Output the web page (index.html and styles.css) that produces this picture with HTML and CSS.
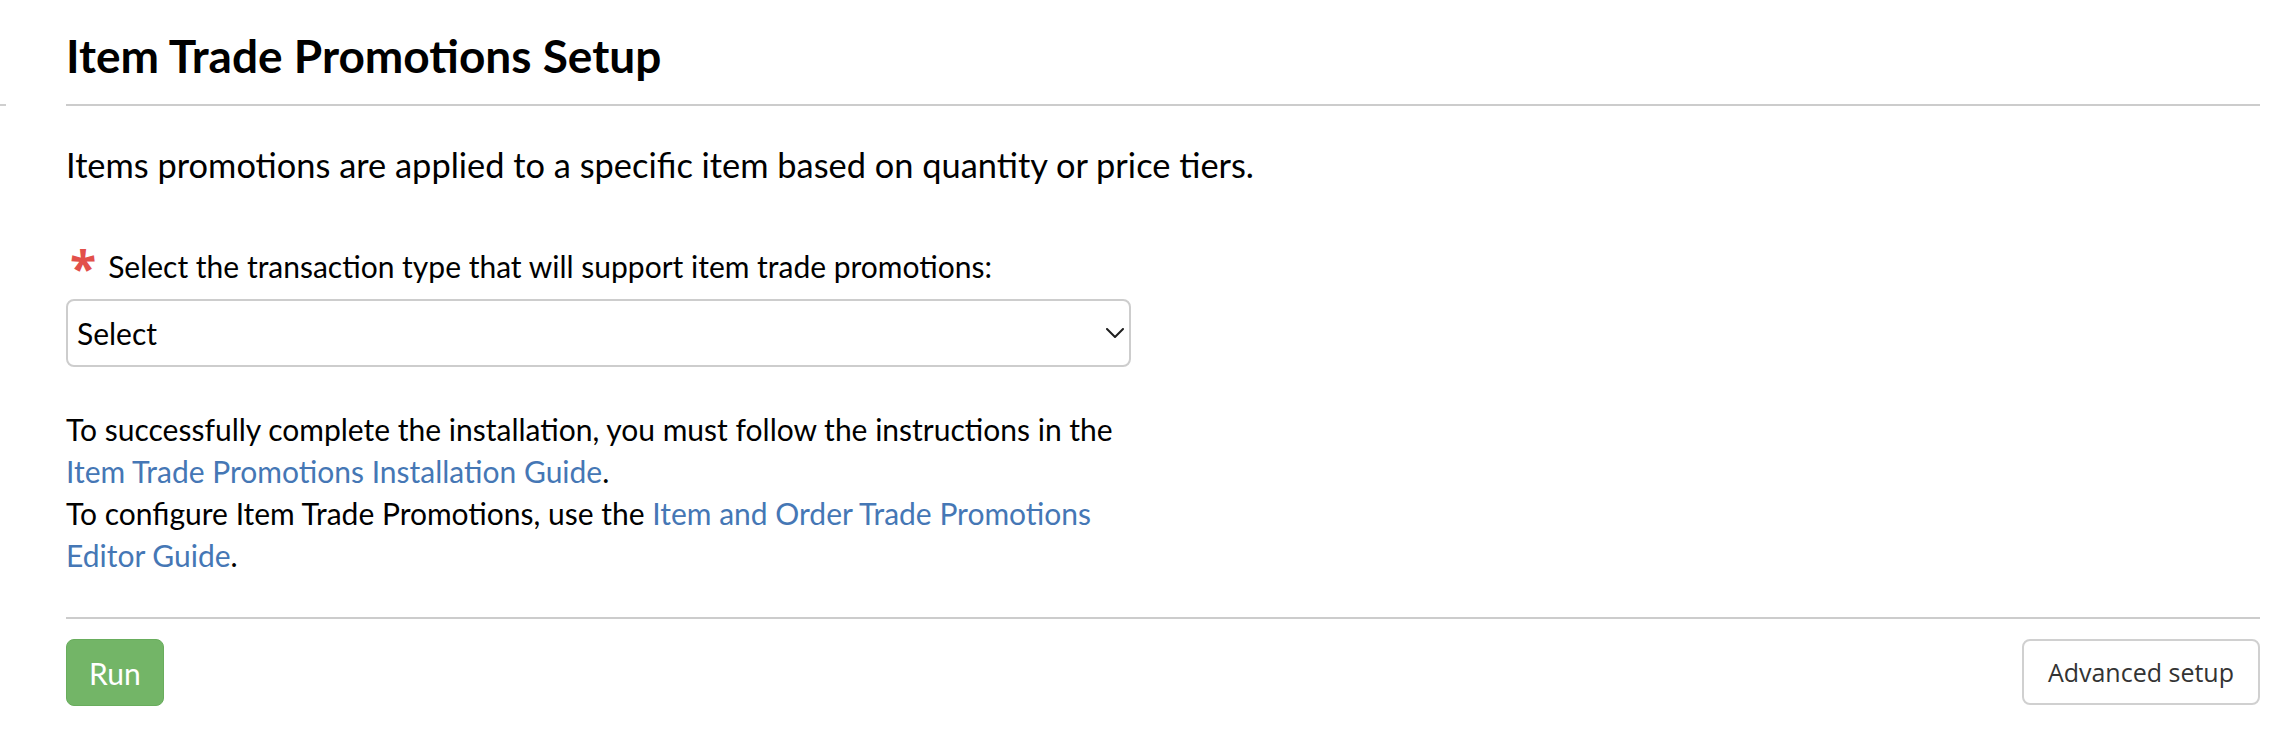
FILE: index.html
```html
<!DOCTYPE html>
<html lang="en">

<head>
    <meta charset="UTF-8">
    <meta name="viewport" content="width=device-width, initial-scale=1.0">
    <title>Item Trade Promotions Setup</title>
    <link rel="stylesheet" href="styles.css">
</head>

<body>
    <div class="page">
        <div class="rail">
            <div class="rail-tick"></div>
        </div>

        <div class="main">
            <div class="header">
                <h1 class="title">Item Trade Promotions Setup</h1>
            </div>

            <p class="intro">Items promotions are applied to a specific item based on quantity or price tiers.</p>

            <div class="form">
                <label class="field-label" for="txType"><span class="required">*</span><span>Select the transaction type that will support item trade promotions:</span></label>
                <div class="select-wrap">
                    <select id="txType" class="select">
                        <option>Select</option>
                    </select>
                    <svg class="chevron" width="18" height="10" viewBox="0 0 18 10">
                        <path d="M1 1 L9 9 L17 1" fill="none" stroke="#1e1e1e" stroke-width="2" stroke-linecap="round" stroke-linejoin="round" />
                    </svg>
                </div>

                <p class="notes">
                    To successfully complete the installation, you must follow the instructions in the
                    <a href="#">Item Trade Promotions Installation Guide</a>.<br>
                    To configure Item Trade Promotions, use the <a href="#">Item and Order Trade Promotions Editor Guide</a>.
                </p>
            </div>

            <div class="footer">
                <button class="btn btn-run">Run</button>
                <button class="btn btn-advanced">Advanced setup</button>
            </div>
        </div>
    </div>
</body>

</html>
```

FILE: styles.css
```css
body {
    margin: 0;
    background: #fff;
    color: #000;
    font-family: "Lato", "Noto Sans", sans-serif;
}

.page {
    display: flex;
}

.rail {
    width: 66px;
    flex: none;
}

.rail-tick {
    width: 6px;
    height: 2px;
    margin-top: 104px;
    background: #cfcfcf;
}

.main {
    flex: 1;
    margin-right: 22px;
}

.header {
    padding-top: 26px;
    padding-bottom: 18px;
    border-bottom: 2px solid #cccccc;
}

.title {
    margin: 0;
    font-size: 46px;
    line-height: 60px;
    font-weight: 700;
}

.intro {
    margin: 36px 0 0;
    font-size: 34.4px;
    line-height: 46px;
}

.form {
    width: 1065px;
}

.field-label {
    display: flex;
    align-items: flex-start;
    margin-top: 57px;
    font-size: 30px;
    line-height: 42px;
}

.required {
    display: block;
    height: 42px;
    margin: -1px 12px 0 4px;
    color: #e2504a;
    font-family: "Open Sans", sans-serif;
    font-size: 48px;
    font-weight: 700;
    line-height: 48px;
}

.select-wrap {
    position: relative;
    margin-top: 12px;
}

.select {
    display: block;
    width: 100%;
    height: 68px;
    margin: 0;
    padding: 0 40px 0 9px;
    border: 2px solid #cdcdcd;
    border-radius: 8px;
    background: #fff;
    color: #000;
    font-family: inherit;
    font-size: 30px;
    appearance: none;
    -webkit-appearance: none;
}

/* the arrow sits on top of the select box */
.chevron {
    position: absolute;
    right: 7px;
    top: 29px;
    pointer-events: none;
}

.notes {
    margin: 41px 0 0;
    font-size: 30px;
    line-height: 42px;
}

.notes a {
    color: #4577b5;
    text-decoration: none;
}

.footer {
    display: flex;
    justify-content: space-between;
    align-items: flex-start;
    margin-top: 41px;
    padding-top: 20px;
    border-top: 2px solid #cccccc;
}

.btn {
    height: 67px;
    border-radius: 8px;
    cursor: pointer;
}

.btn-run {
    padding: 0 22px;
    background: #73b567;
    border: 1px solid #69ad5d;
    color: #fff;
    font-family: "Lato", sans-serif;
    font-size: 30px;
}

.btn-advanced {
    height: 66px;
    padding: 0 24px;
    background: #fff;
    border: 2px solid #d0d0d0;
    color: #333;
    font-family: "Open Sans", sans-serif;
    font-size: 25px;
}
```
